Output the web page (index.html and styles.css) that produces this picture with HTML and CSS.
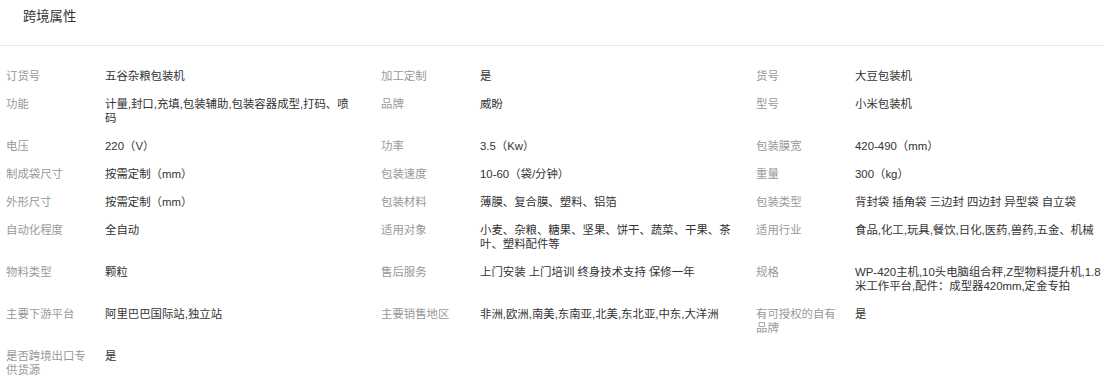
FILE: index.html
```html
<!DOCTYPE html>
<html lang="zh-CN">
<head>
<meta charset="utf-8">
<title>跨境属性</title>
<link rel="stylesheet" href="styles.css">
</head>
<body>
<div class="panel">
  <div class="panel-head"><span class="panel-title">跨境属性</span></div>
  <div class="attr-grid">
    <div class="attr"><div class="attr-label">订货号</div><div class="attr-value">五谷杂粮包装机</div></div>
    <div class="attr"><div class="attr-label">加工定制</div><div class="attr-value">是</div></div>
    <div class="attr"><div class="attr-label">货号</div><div class="attr-value">大豆包装机</div></div>

    <div class="attr"><div class="attr-label">功能</div><div class="attr-value">计量,封口,充填,包装辅助,包装容器成型,打码、喷码</div></div>
    <div class="attr"><div class="attr-label">品牌</div><div class="attr-value">威盼</div></div>
    <div class="attr"><div class="attr-label">型号</div><div class="attr-value">小米包装机</div></div>

    <div class="attr"><div class="attr-label">电压</div><div class="attr-value">220（V）</div></div>
    <div class="attr"><div class="attr-label">功率</div><div class="attr-value">3.5（Kw）</div></div>
    <div class="attr"><div class="attr-label">包装膜宽</div><div class="attr-value">420-490（mm）</div></div>

    <div class="attr"><div class="attr-label">制成袋尺寸</div><div class="attr-value">按需定制（mm）</div></div>
    <div class="attr"><div class="attr-label">包装速度</div><div class="attr-value">10-60（袋/分钟）</div></div>
    <div class="attr"><div class="attr-label">重量</div><div class="attr-value">300（kg）</div></div>

    <div class="attr"><div class="attr-label">外形尺寸</div><div class="attr-value">按需定制（mm）</div></div>
    <div class="attr"><div class="attr-label">包装材料</div><div class="attr-value">薄膜、复合膜、塑料、铝箔</div></div>
    <div class="attr"><div class="attr-label">包装类型</div><div class="attr-value">背封袋 插角袋 三边封 四边封 异型袋 自立袋</div></div>

    <div class="attr"><div class="attr-label">自动化程度</div><div class="attr-value">全自动</div></div>
    <div class="attr"><div class="attr-label">适用对象</div><div class="attr-value">小麦、杂粮、糖果、坚果、饼干、蔬菜、干果、茶叶、塑料配件等</div></div>
    <div class="attr"><div class="attr-label">适用行业</div><div class="attr-value">食品,化工,玩具,餐饮,日化,医药,兽药,五金、机械</div></div>

    <div class="attr"><div class="attr-label">物料类型</div><div class="attr-value">颗粒</div></div>
    <div class="attr"><div class="attr-label">售后服务</div><div class="attr-value">上门安装 上门培训 终身技术支持 保修一年</div></div>
    <div class="attr"><div class="attr-label">规格</div><div class="attr-value">WP-420主机,10头电脑组合秤,Z型物料提升机,1.8米工作平台,配件：成型器420mm,定金专拍</div></div>

    <div class="attr"><div class="attr-label">主要下游平台</div><div class="attr-value">阿里巴巴国际站,独立站</div></div>
    <div class="attr"><div class="attr-label">主要销售地区</div><div class="attr-value">非洲,欧洲,南美,东南亚,北美,东北亚,中东,大洋洲</div></div>
    <div class="attr"><div class="attr-label">有可授权的自有品牌</div><div class="attr-value">是</div></div>

    <div class="attr"><div class="attr-label">是否跨境出口专供货源</div><div class="attr-value">是</div></div>
  </div>
</div>
</body>
</html>
```

FILE: styles.css
```css
html, body {
  margin: 0;
  padding: 0;
  background: #ffffff;
  overflow: hidden;
}

body {
  font-family: "Liberation Sans", "Noto Sans CJK SC", sans-serif;
  color: #333333;
}

.panel {
  width: 1104px;
}

.panel-head {
  box-sizing: border-box;
  height: 46px;
  padding: 9px 23px 0;
  border-bottom: 1px solid #e8e8e8;
}

.panel-title {
  display: block;
  font-size: 13.3px;
  line-height: 16px;
  color: #333333;
}

.attr-grid {
  display: grid;
  grid-template-columns: 375px 375px 1fr;
  padding: 16px 0 0 6px;
}

.attr {
  display: flex;
  align-items: flex-start;
  padding: 7px 0;
  font-size: 11.4px;
  line-height: 14px;
}

.attr-label {
  flex: 0 0 auto;
  box-sizing: border-box;
  width: 99px;
  padding-right: 12px;
  color: #999999;
}

.attr-value {
  flex: 0 0 auto;
  width: 253px;
  color: #333333;
}
```
